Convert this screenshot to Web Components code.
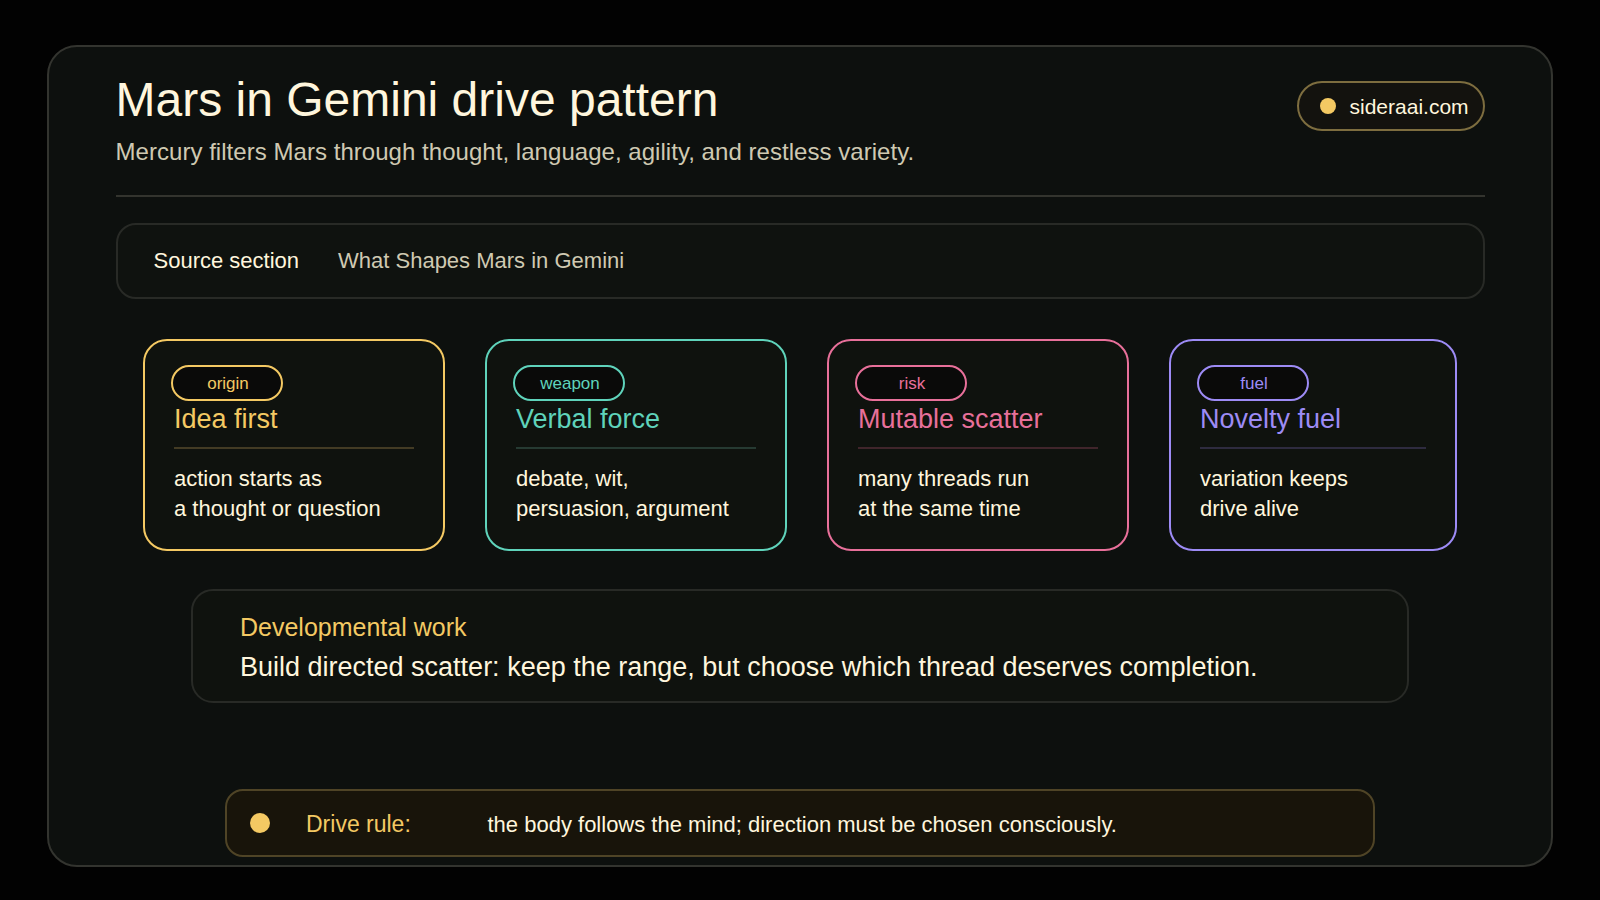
<!doctype html>
<html>
<head>
<meta charset="utf-8">
<title>Mars in Gemini drive pattern</title>
<style>
  html, body { margin: 0; height: 100%; background: #020202; }
  body { font-family: "Liberation Sans", Arial, sans-serif; color: #fff7e2; }
</style>
</head>
<body>
<drive-panel>
  <drive-header title="Mars in Gemini drive pattern" sub="Mercury filters Mars through thought, language, agility, and restless variety." site="sideraai.com"></drive-header>
  <source-bar label="Source section" value="What Shapes Mars in Gemini"></source-bar>
  <card-row>
    <drive-card tag="origin" heading="Idea first" color="#f4c963" line="#433b24" style="--w:302px">action starts as<br>a thought or question</drive-card>
    <drive-card tag="weapon" heading="Verbal force" color="#5fd3bb" line="#263a32" style="--w:302px">debate, wit,<br>persuasion, argument</drive-card>
    <drive-card tag="risk" heading="Mutable scatter" color="#e8709a" line="#40252b" style="--w:302px">many threads run<br>at the same time</drive-card>
    <drive-card tag="fuel" heading="Novelty fuel" color="#9d8bf5" line="#2e2b3f" style="--w:288px">variation keeps<br>drive alive</drive-card>
  </card-row>
  <work-box heading="Developmental work">Build directed scatter: keep the range, but choose which thread deserves completion.</work-box>
  <rule-bar label="Drive rule:">the body follows the mind; direction must be chosen consciously.</rule-bar>
</drive-panel>

<script>
class DrivePanel extends HTMLElement {
  constructor() {
    super();
    this.attachShadow({ mode: 'open' }).innerHTML = `
      <style>
        :host {
          display: block;
          box-sizing: border-box;
          position: absolute;
          left: 47px; top: 45px;
          width: 1506px; height: 822px;
          padding: 0 66.5px;
          background: #0d100e;
          border: 2px solid #33342f;
          border-radius: 30px;
          overflow: hidden;
        }
      </style>
      <slot></slot>`;
  }
}

class DriveHeader extends HTMLElement {
  constructor() {
    super();
    this.attachShadow({ mode: 'open' });
  }
  connectedCallback() {
    this.shadowRoot.innerHTML = `
      <style>
        :host {
          display: flex;
          justify-content: space-between;
          align-items: flex-start;
          height: 150px;
          box-sizing: border-box;
          border-bottom: 2px solid #33342e;
        }
        h1 {
          margin: 26px 0 0;
          font: 400 48px/54px "Liberation Sans", Arial, sans-serif;
          color: #fff6dd;
        }
        p {
          margin: 10px 0 0;
          font: 400 24px/30px "Liberation Sans", Arial, sans-serif;
          letter-spacing: 0.04px;
          color: #cfc9b2;
        }
        .pill {
          display: flex;
          align-items: center;
          gap: 14px;
          box-sizing: border-box;
          width: 188px;
          height: 50px;
          margin-top: 34px;
          padding-left: 21px;
          border: 2px solid #7d6d3f;
          border-radius: 25px;
          background: #13120e;
          font-size: 21px;
          color: #fff6dd;
        }
        .pill i {
          width: 16px;
          height: 16px;
          border-radius: 50%;
          background: #f4c963;
        }
        .pill span { padding-top: 1px; }
      </style>
      <div>
        <h1>${this.getAttribute('title')}</h1>
        <p>${this.getAttribute('sub')}</p>
      </div>
      <div class="pill"><i></i><span>${this.getAttribute('site')}</span></div>`;
  }
}

class SourceBar extends HTMLElement {
  constructor() {
    super();
    this.attachShadow({ mode: 'open' });
  }
  connectedCallback() {
    this.shadowRoot.innerHTML = `
      <style>
        :host {
          display: flex;
          align-items: center;
          gap: 39px;
          box-sizing: border-box;
          height: 76px;
          margin-top: 26px;
          padding-left: 36px;
          background: #0f120f;
          border: 2px solid #282a26;
          border-radius: 20px;
          font-size: 22px;
        }
        b { font-weight: 400; color: #fff6dd; }
        span { color: #cfc9b2; }
      </style>
      <b>${this.getAttribute('label')}</b>
      <span>${this.getAttribute('value')}</span>`;
  }
}

class CardRow extends HTMLElement {
  constructor() {
    super();
    this.attachShadow({ mode: 'open' }).innerHTML = `
      <style>
        :host {
          display: flex;
          justify-content: center;
          gap: 40px;
          margin-top: 40px;
        }
      </style>
      <slot></slot>`;
  }
}

class DriveCard extends HTMLElement {
  constructor() {
    super();
    this.attachShadow({ mode: 'open' });
  }
  connectedCallback() {
    const color = this.getAttribute('color');
    this.shadowRoot.innerHTML = `
      <style>
        :host {
          display: block;
          box-sizing: border-box;
          width: var(--w);
          height: 212px;
          padding: 24px 29px 0;
          background: #0f120e;
          border: 2px solid ${color};
          border-radius: 24px;
        }
        .tag {
          display: flex;
          align-items: center;
          justify-content: center;
          box-sizing: border-box;
          width: 112px;
          height: 36px;
          margin-left: -3px;
          padding: 2px 0 0 2px;
          background: #0a0a09;
          border: 2px solid ${color};
          border-radius: 18px;
          font-size: 17px;
          color: ${color};
        }
        h2 {
          margin: 0;
          padding: 1px 0 11px;
          height: 34px;
          font: 400 27px/34px "Liberation Sans", Arial, sans-serif;
          color: ${color};
          border-bottom: 2px solid ${this.getAttribute('line')};
        }
        .text {
          margin-top: 15px;
          font-size: 22px;
          line-height: 30px;
          color: #fff6dd;
        }
      </style>
      <div class="tag">${this.getAttribute('tag')}</div>
      <h2>${this.getAttribute('heading')}</h2>
      <div class="text"><slot></slot></div>`;
  }
}

class WorkBox extends HTMLElement {
  constructor() {
    super();
    this.attachShadow({ mode: 'open' });
  }
  connectedCallback() {
    this.shadowRoot.innerHTML = `
      <style>
        :host {
          display: block;
          box-sizing: border-box;
          width: 1218px;
          height: 114px;
          margin: 38px auto 0;
          padding: 21px 47px 0;
          background: #0f120e;
          border: 2px solid #282a26;
          border-radius: 22px;
        }
        h3 {
          margin: 0;
          font: 400 25px/30px "Liberation Sans", Arial, sans-serif;
          color: #f4c963;
        }
        div {
          margin-top: 8px;
          font-size: 27px;
          line-height: 34px;
          color: #fff6dd;
        }
      </style>
      <h3>${this.getAttribute('heading')}</h3>
      <div><slot></slot></div>`;
  }
}

class RuleBar extends HTMLElement {
  constructor() {
    super();
    this.attachShadow({ mode: 'open' });
  }
  connectedCallback() {
    this.shadowRoot.innerHTML = `
      <style>
        :host {
          display: flex;
          align-items: center;
          box-sizing: border-box;
          width: 1150px;
          height: 68px;
          margin: 86px auto 0;
          padding-left: 23px;
          background: #18140a;
          border: 2px solid #4f4426;
          border-radius: 18px;
        }
        i {
          width: 20px;
          height: 20px;
          margin-top: -1px;
          border-radius: 50%;
          background: #f4c963;
        }
        b {
          width: 181.5px;
          margin-left: 36px;
          padding-top: 2px;
          font-weight: 400;
          font-size: 23px;
          color: #f4c963;
        }
        span { padding-top: 4px; font-size: 22px; color: #fff6dd; }
      </style>
      <i></i>
      <b>${this.getAttribute('label')}</b>
      <span><slot></slot></span>`;
  }
}

customElements.define('drive-panel', DrivePanel);
customElements.define('drive-header', DriveHeader);
customElements.define('source-bar', SourceBar);
customElements.define('card-row', CardRow);
customElements.define('drive-card', DriveCard);
customElements.define('work-box', WorkBox);
customElements.define('rule-bar', RuleBar);
</script>
</body>
</html>
